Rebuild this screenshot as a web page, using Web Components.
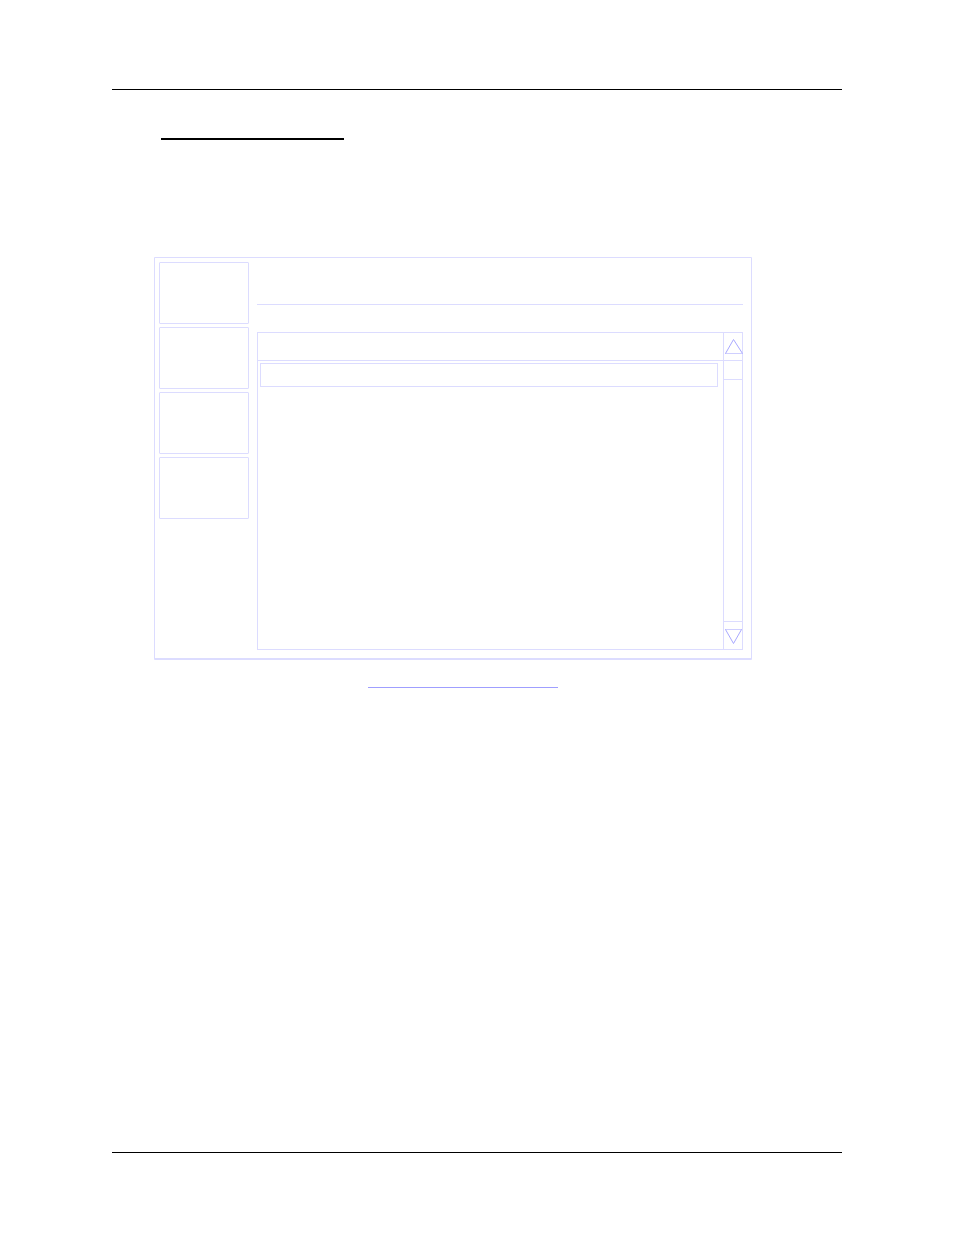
<!DOCTYPE html>
<html lang="en">
<head>
  <meta charset="utf-8">
  <meta name="viewport" content="width=device-width, initial-scale=1">
  <title>Manual page</title>
  <style>
    body {
      margin: 0;
      background: #fff;
      font-family: "Liberation Sans", Arial, sans-serif;
      --line: #dcdcff;
      --line-strong: #9f9fff;
    }
  </style>
</head>
<body>
  <manual-page>
    <screen-panel>
      <side-button slot="side" label="Option 1"></side-button>
      <side-button slot="side" label="Option 2"></side-button>
      <side-button slot="side" label="Option 3"></side-button>
      <side-button slot="side" label="Option 4"></side-button>
      <scroll-list></scroll-list>
    </screen-panel>
  </manual-page>

  <script>
    class ManualPage extends HTMLElement {
      connectedCallback() {
        this.attachShadow({ mode: "open" });
        this.shadowRoot.innerHTML = `
          <style>
            :host {
              display: flex;
              flex-direction: column;
              box-sizing: border-box;
              min-height: 100vh;
              padding: 89px 112px 82px;
            }
            header {
              border-top: 1px solid #000;
            }
            main {
              flex: 1;
              padding: 48px 90px 48px 42px;
            }
            .title {
              width: 183px;
              height: 2px;
              margin: 0 0 117px 7px;
              background: #000;
            }
            figure {
              margin: 0;
            }
            figcaption {
              display: flex;
              justify-content: center;
              padding: 27px 0 0 20px;
            }
            .caption-line {
              width: 190px;
              height: 1px;
              background: var(--line-strong);
            }
            footer {
              border-top: 1px solid #000;
            }
          </style>
          <header></header>
          <main>
            <div class="title"></div>
            <figure>
              <slot></slot>
              <figcaption><div class="caption-line"></div></figcaption>
            </figure>
          </main>
          <footer></footer>
        `;
      }
    }

    class ScreenPanel extends HTMLElement {
      connectedCallback() {
        this.attachShadow({ mode: "open" });
        this.shadowRoot.innerHTML = `
          <style>
            :host {
              display: grid;
              grid-template-columns: 90px 1fr;
              gap: 8px;
              padding: 4px 8px 8px 4px;
              border: 1px solid var(--line);
              border-bottom-width: 2px;
              border-radius: 1px;
            }
            nav {
              display: flex;
              flex-direction: column;
              gap: 3px;
            }
            .heading {
              height: 42px;
              margin-bottom: 27px;
              border-bottom: 1px solid var(--line);
            }
          </style>
          <nav><slot name="side"></slot></nav>
          <section>
            <div class="heading"></div>
            <slot></slot>
          </section>
        `;
      }
    }

    class SideButton extends HTMLElement {
      connectedCallback() {
        this.attachShadow({ mode: "open" });
        this.shadowRoot.innerHTML = `
          <style>
            :host {
              display: block;
            }
            button {
              display: block;
              box-sizing: border-box;
              width: 100%;
              height: 62px;
              padding: 0;
              background: none;
              border: 1px solid var(--line);
              border-radius: 1px;
            }
          </style>
          <button type="button" aria-label="${this.getAttribute("label")}"></button>
        `;
      }
    }

    class ScrollList extends HTMLElement {
      connectedCallback() {
        this.attachShadow({ mode: "open" });
        this.shadowRoot.innerHTML = `
          <style>
            :host {
              display: grid;
              grid-template-columns: 1fr 19px;
              border: 1px solid var(--line);
            }
            .head {
              height: 27px;
              border-bottom: 1px solid var(--line);
            }
            .rows {
              height: 284px;
              padding: 2px 5px 2px 2px;
            }
            .row {
              height: 22px;
              border: 1px solid var(--line);
            }
            .bar {
              display: flex;
              flex-direction: column;
              border-left: 1px solid var(--line);
            }
            button {
              box-sizing: border-box;
              height: 28px;
              padding: 0;
              background: none;
              border: 0 solid var(--line);
            }
            .up {
              border-bottom-width: 1px;
            }
            .down {
              border-top-width: 1px;
            }
            .thumb {
              height: 18px;
              border-bottom: 1px solid var(--line);
            }
            .track {
              flex: 1;
            }
            svg {
              display: block;
              overflow: visible;
              fill: none;
              stroke: #a8a8ff;
            }
            .base {
              stroke: #cfcfff;
            }
          </style>
          <div>
            <div class="head"></div>
            <div class="rows"><div class="row"></div></div>
          </div>
          <div class="bar">
            <button type="button" class="up" aria-label="Scroll up">
              <svg width="18" height="27" viewBox="0 0 18 27">
                <path class="base" d="M1 20.5H19"/>
                <path d="M1.5 20.5L9.5 6.5L18.5 20.5"/>
              </svg>
            </button>
            <div class="thumb"></div>
            <div class="track"></div>
            <button type="button" class="down" aria-label="Scroll down">
              <svg width="18" height="27" viewBox="0 0 18 27">
                <path class="base" d="M1 7.5H18"/>
                <path d="M1.5 7.5L9.5 21.5L17.5 7.5"/>
              </svg>
            </button>
          </div>
        `;
      }
    }

    customElements.define("manual-page", ManualPage);
    customElements.define("screen-panel", ScreenPanel);
    customElements.define("side-button", SideButton);
    customElements.define("scroll-list", ScrollList);
  </script>
</body>
</html>
